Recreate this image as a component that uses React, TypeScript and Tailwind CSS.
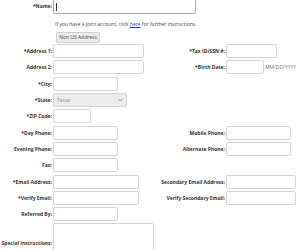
import React from 'react';

const label = 'w-[53px] shrink-0 text-right font-bold pr-[1px]';
const rlabel = 'w-[75px] shrink-0 text-right font-bold pr-[1px]';
const box = 'h-[14px] shrink-0 rounded-[2px] border border-[#d4d4d4] bg-white';

function Field({ text, width }: { text: string; width: string }) {
  return (
    <div className="flex w-[151px] shrink-0 items-center">
      <span className={label}>{text}</span>
      <div className={`${box} ${width}`} />
    </div>
  );
}

function Right({ text, width, hint }: { text: string; width: string; hint?: string }) {
  return (
    <div className="flex items-center">
      <span className={rlabel}>{text}</span>
      <div className={`${box} ${width}`} />
      {hint && <span className="pl-[1px] text-[#777]">{hint}</span>}
    </div>
  );
}

export default function App() {
  return (
    <div className="h-[250px] w-[300px] overflow-hidden bg-white font-['Open_Sans',sans-serif] text-[5px] leading-none text-[#333]">
      {/* Name */}
      <div className="-mt-[1px] flex items-center">
        <span className={label}>*Name:</span>
        <div className="flex h-[15px] w-[143px] items-center rounded-[2px] border border-[#8fb0d8] pl-[2px]">
          <span className="h-[8px] w-px bg-[#333]" />
        </div>
      </div>

      <p className="mt-[8px] pl-[55px] text-[#444]">
        If you have a joint account, click{' '}
        <span className="text-[#1a3fb8] underline">here</span> for further instructions.
      </p>

      <div className="mt-[5px] pl-[56px]">
        <button className="h-[11px] w-[44px] rounded-[2px] border border-[#d0d0d0] bg-[#ececec] text-[5px] text-[#444]">
          Non US Address
        </button>
      </div>

      <div className="mt-[1px] flex flex-col gap-[2px]">
        <div className="flex items-center">
          <Field text="*Address 1:" width="w-[91px]" />
          <Right text="*Tax ID/SSN #:" width="w-[51px]" />
        </div>
        <div className="flex items-center">
          <Field text="Address 2:" width="w-[91px]" />
          <Right text="*Birth Date:" width="w-[38px]" hint="MM/DD/YYYY" />
        </div>
        <div className="mt-[1px]">
          <Field text="*City:" width="w-[65px]" />
        </div>
        <div className="flex items-center">
          <span className={label}>*State:</span>
          <div className="flex h-[14px] w-[74px] items-center justify-between rounded-[2px] border border-[#d4d4d4] bg-[#ececec] px-[3px] text-[#888]">
            <span>Texas</span>
            <svg width="5" height="4" viewBox="0 0 10 8">
              <path d="M1 2l4 4 4-4" fill="none" stroke="#777" strokeWidth="1.6" />
            </svg>
          </div>
        </div>
        <Field text="*ZIP Code:" width="w-[38px]" />
        <div className="mt-[1px] flex items-center">
          <Field text="*Day Phone:" width="w-[65px]" />
          <Right text="Mobile Phone:" width="w-[65px]" />
        </div>
        <div className="flex items-center">
          <Field text="Evening Phone:" width="w-[65px]" />
          <Right text="Alternate Phone:" width="w-[65px]" />
        </div>
        <Field text="Fax:" width="w-[65px]" />
        <div className="mt-[1px] flex items-center">
          <Field text="*Email Address:" width="w-[86px]" />
          <Right text="Secondary Email Address:" width="w-[70px]" />
        </div>
        <div className="flex items-center">
          <Field text="*Verify Email:" width="w-[86px]" />
          <Right text="Verify Secondary Email:" width="w-[70px]" />
        </div>
        <Field text="Referred By:" width="w-[65px]" />
        <div className="flex items-center">
          <span className={label}>Special Instructions:</span>
          <div className="h-[40px] w-[101px] shrink-0 rounded-[2px] border border-[#d4d4d4] bg-white" />
        </div>
      </div>
    </div>
  );
}
